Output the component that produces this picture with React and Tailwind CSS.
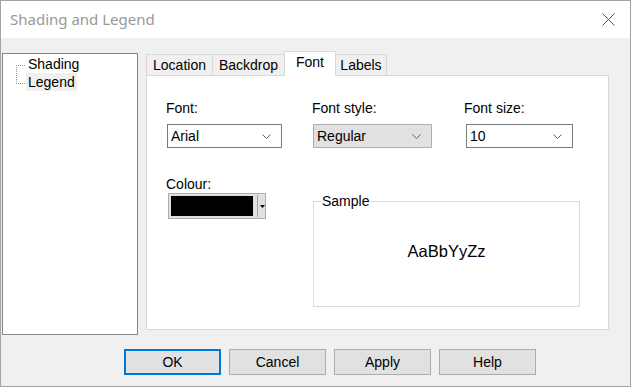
import React from "react";

const Chevron = () => (
  <svg width="9" height="5" viewBox="0 0 9 5" className="shrink-0">
    <path d="M0.5 0.5 L4.5 4.5 L8.5 0.5" fill="none" stroke="#606060" strokeWidth="1" />
  </svg>
);

const Combo = ({ value, width, gray }) => (
  <div
    className={
      "h-[24px] flex items-center justify-between pl-[3px] pr-[10px] border " +
      (gray ? "bg-[#e1e1e1] border-[#adadad]" : "bg-white border-[#7a7a7a]")
    }
    style={{ width }}
  >
    <span>{value}</span>
    <Chevron />
  </div>
);

const Tab = ({ label, width, active }) => (
  <div
    className={
      "-ml-px first:ml-0 border border-b-0 border-[#d9d9d9] flex items-center justify-center " +
      (active ? "h-[25px] bg-white relative z-10 -mb-px" : "h-[21px] bg-[#f0f0f0]")
    }
    style={{ width }}
  >
    <span className={active ? "-mt-[4px]" : ""}>{label}</span>
  </div>
);

const Button = ({ label, primary }) => (
  <button
    className={
      "w-[97px] h-[26px] bg-[#e1e1e1] text-[14px] text-black " +
      (primary ? "border-2 border-[#0078d7]" : "border border-[#adadad]")
    }
  >
    {label}
  </button>
);

export default function App() {
  return (
    <div
      className="w-[631px] h-[387px] border border-[#a3a3a3] bg-[#f0f0f0] flex flex-col text-black"
      style={{ fontFamily: '"Liberation Sans", Arial, sans-serif' }}
    >
      {/* title bar */}
      <div className="h-[37px] bg-white flex items-center justify-between pl-[9px] pr-[15px]">
        <span
          className="text-[15px] text-[#999999]"
          style={{ fontFamily: '"Noto Sans", "Open Sans", sans-serif' }}
        >
          Shading and Legend
        </span>
        <svg width="13" height="13" viewBox="0 0 13 13">
          <path d="M0.5 0.5 L12.5 12.5 M12.5 0.5 L0.5 12.5" stroke="#555" strokeWidth="1" />
        </svg>
      </div>

      {/* body */}
      <div className="flex items-start pt-[13px] pl-[1px] text-[14px]">
        {/* tree */}
        <div className="relative mt-[2px] w-[136px] h-[282px] border border-[#828790] bg-white pt-[1px]">
          <svg className="absolute left-0 top-0" width="30" height="40">
            <path
              d="M13.5 11 V29 M13 11.5 H23 M13 29.5 H23"
              stroke="#9a9a9a"
              strokeWidth="1"
              strokeDasharray="1 1"
              fill="none"
            />
          </svg>
          <div className="h-[18px] flex items-center pl-[23px]">
            <span className="px-[2px]">Shading</span>
          </div>
          <div className="h-[18px] flex items-center pl-[23px]">
            <span className="px-[2px] h-[18px] flex items-center bg-[#f0f0f0]">Legend</span>
          </div>
        </div>

        {/* tabs */}
        <div className="ml-[8px] flex flex-col">
          <div className="flex items-end h-[24px]">
            <Tab label="Location" width={67} />
            <Tab label="Backdrop" width={73} />
            <Tab label="Font" width={52} active />
            <Tab label="Labels" width={52} />
          </div>
          <div className="w-[463px] h-[255px] border border-[#d9d9d9] bg-white pl-[19px] pt-[22px]">
            <div className="flex">
              <div className="w-[146px]">
                <div className="h-[19px]">Font:</div>
                <div className="ml-[1px] mt-[7px]">
                  <Combo value="Arial" width={115} />
                </div>
              </div>
              <div className="w-[152px]">
                <div className="h-[19px]">Font style:</div>
                <div className="ml-[1px] mt-[7px]">
                  <Combo value="Regular" width={119} gray />
                </div>
              </div>
              <div>
                <div className="h-[19px]">Font size:</div>
                <div className="ml-[2px] mt-[7px]">
                  <Combo value="10" width={107} />
                </div>
              </div>
            </div>

            <div className="flex mt-[26px]">
              <div className="w-[147px]">
                <div className="h-[19px]">Colour:</div>
                <div className="ml-[2px] w-[98px] h-[26px] border border-[#adadad] bg-[#e1e1e1] flex items-center pl-[2px]">
                  <div className="w-[82px] h-[20px] bg-black" />
                  <div className="ml-[4px] w-px h-[22px] bg-[#a0a0a0]" />
                  <svg className="ml-[2px]" width="5" height="3" viewBox="0 0 5 3">
                    <path d="M0 0 H5 L2.5 3 Z" fill="#000" />
                  </svg>
                </div>
              </div>
              <fieldset className="mt-[19px] w-[267px] h-[114px] border border-[#dcdcdc] pl-[7px]">
                <legend className="px-[1px] leading-[16px]">Sample</legend>
                <div className="h-[84px] flex items-center justify-center text-[16.5px] pr-[7px]">
                  AaBbYyZz
                </div>
              </fieldset>
            </div>
          </div>
        </div>
      </div>

      {/* buttons */}
      <div className="flex gap-[8px] pl-[123px] mt-[14px]">
        <Button label="OK" primary />
        <Button label="Cancel" />
        <Button label="Apply" />
        <Button label="Help" />
      </div>
    </div>
  );
}
